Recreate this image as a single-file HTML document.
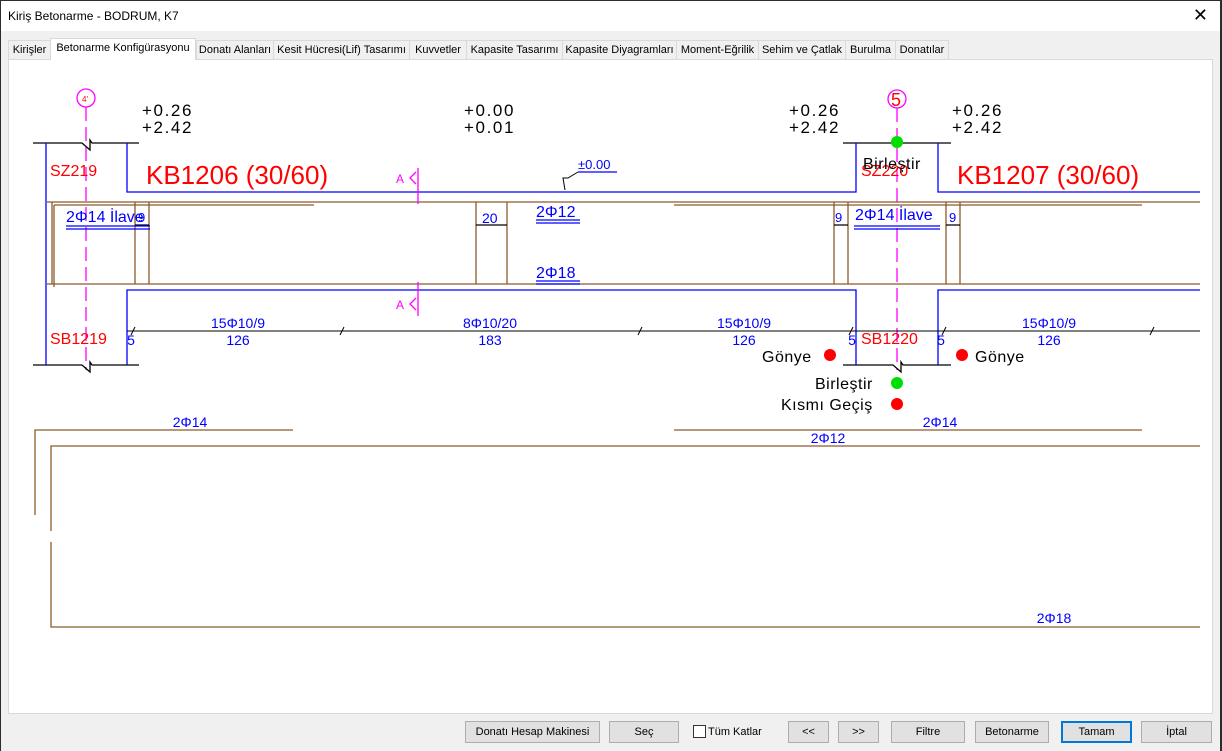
<!DOCTYPE html>
<html><head><meta charset="utf-8"><style>
*{margin:0;padding:0;box-sizing:border-box}
body{width:1222px;height:751px;overflow:hidden;background:#2b2b30;font-family:"Liberation Sans",sans-serif;position:relative}
#win{position:absolute;left:1px;top:1px;width:1219px;height:750px;background:#f0f0f0}
#title{position:absolute;left:0;top:0;width:1219px;height:30px;background:#fff;font-size:12px;color:#000;padding:8px 0 0 7px}
#close{position:absolute;right:12px;top:4px;font-size:18px}
.tab{position:absolute;top:39px;height:19px;border:1px solid #d9d9d9;border-bottom:none;background:#f0f0f0;font-size:11px;padding:3px 0 0 0;text-align:center;color:#000}
.tab.act{top:37px;height:22px;background:#fff;z-index:2}
#panel{position:absolute;left:7px;top:58px;width:1205px;height:655px;background:#fff;border:1px solid #d9d9d9}
.btn{position:absolute;top:720px;height:22px;background:#e1e1e1;border:1px solid #adadad;font-size:11px;text-align:center;padding-top:4px}
svg text{font-family:"Liberation Sans",sans-serif}
</style></head><body>
<div id="win">
<div id="title">Kiriş Betonarme - BODRUM, K7<span id="close">✕</span></div>
<div class="tab" style="left:7px;width:43px">Kirişler</div>
<div class="tab act" style="left:49px;width:146px;padding-top:3px">Betonarme Konfigürasyonu</div>
<div class="tab" style="left:195px;width:78px">Donatı Alanları</div>
<div class="tab" style="left:272px;width:137px">Kesit Hücresi(Lif) Tasarımı</div>
<div class="tab" style="left:408px;width:58px">Kuvvetler</div>
<div class="tab" style="left:465px;width:97px">Kapasite Tasarımı</div>
<div class="tab" style="left:561px;width:115px">Kapasite Diyagramları</div>
<div class="tab" style="left:675px;width:83px">Moment-Eğrilik</div>
<div class="tab" style="left:757px;width:88px">Sehim ve Çatlak</div>
<div class="tab" style="left:844px;width:51px">Burulma</div>
<div class="tab" style="left:894px;width:54px">Donatılar</div>
<div id="panel"></div>
<div class="btn" style="left:464px;width:135px">Donatı Hesap Makinesi</div>
<div class="btn" style="left:608px;width:70px">Seç</div>
<div style="position:absolute;left:692px;top:724px;width:13px;height:13px;border:1px solid #333;background:#fff"></div>
<div style="position:absolute;left:707px;top:725px;font-size:11px">Tüm Katlar</div>
<div class="btn" style="left:787px;width:41px">&lt;&lt;</div>
<div class="btn" style="left:837px;width:41px">&gt;&gt;</div>
<div class="btn" style="left:890px;width:74px">Filtre</div>
<div class="btn" style="left:974px;width:74px">Betonarme</div>
<div class="btn" style="left:1060px;width:71px;border:2px solid #0078d7;padding-top:3px">Tamam</div>
<div class="btn" style="left:1140px;width:71px">İptal</div>
</div>
<svg width="1222" height="751" style="position:absolute;left:0;top:0" xmlns="http://www.w3.org/2000/svg">
<g fill="none" stroke-width="1.3">
<circle cx="86" cy="98" r="9" stroke="#f0f"/>
<line x1="86" y1="107" x2="86" y2="370" stroke="#f0f" stroke-dasharray="14,6"/>
<circle cx="897" cy="99" r="9" stroke="#f0f"/>
<line x1="897" y1="108" x2="897" y2="370" stroke="#f0f" stroke-dasharray="14,6"/>
<path d="M33 143H82L90 150L90 140L92 143H139" stroke="#000"/>
<path d="M33 365H82L90 372L90 362L92 365H139" stroke="#000"/>
<path d="M843 143H951" stroke="#000"/>
<path d="M843 365H893L901 372L901 362L903 365H951" stroke="#000"/>
<path d="M46 143V365M127 143V192H856V143M938 143V192H1200" stroke="#00f"/>
<path d="M127 365V290H856V365M938 365V290H1200" stroke="#00f"/>
<g stroke="#8c5a2a">
<path d="M47 202H1200M54 205H314M674 205H1142M47 284H1200M52 202V284M54 205V287"/>
<path d="M135 202V284M149 202V284M476 202V284M507 202V284M834 202V284M848 202V284M946 202V284M960 202V284"/>
<path d="M35 515V430H293M674 430H1142M51 531V446H1200M51 542V627H1200"/>
</g>
<path d="M135 225H149M476 225H507M834 225H848M946 225H960" stroke="#000"/>
<path d="M418 168V204M418 282V316M416 172L410 178L416 184M416 298L410 304L416 310" stroke="#f0f"/>
<path d="M127 331H1200M131 335L135 327M340 335L344 327M638 335L642 327M849 335L853 327M942 335L946 327M1150 335L1154 327" stroke="#000" stroke-width="1"/>
<path d="M578 172H617M578 172L568 178H563L565 190" stroke="#000" stroke-width="1"/>
<g stroke="#00f">
<path d="M66 226H150M66 229H150M536 220H580M536 223H580M536 281H580M536 284H580M854 226H940M854 229H940M578 172H617"/>
</g>
</g>
<g fill="#f00"><text x="82" y="102" font-size="8">4'</text><text x="891" y="106" font-size="18">5</text></g>
<g font-family="DejaVu Sans" font-size="17" fill="#000" letter-spacing="1.6">
<text x="142" y="116">+0.26</text><text x="142" y="133">+2.42</text>
<text x="464" y="116">+0.00</text><text x="464" y="133">+0.01</text>
<text x="789" y="116">+0.26</text><text x="789" y="133">+2.42</text>
<text x="952" y="116">+0.26</text><text x="952" y="133">+2.42</text>
</g>
<g fill="#f00">
<text x="50" y="176" font-size="16">SZ219</text>
<text x="146" y="184" font-size="26">KB1206 (30/60)</text>
<text x="957" y="184" font-size="26">KB1207 (30/60)</text>
<text x="861" y="176" font-size="16">SZ220</text>
<text x="50" y="344" font-size="16">SB1219</text>
<text x="861" y="344" font-size="16">SB1220</text>
</g>
<g fill="#f0f" font-size="12"><text x="396" y="183">A</text><text x="396" y="309">A</text></g>
<g fill="#00f">
<text x="66" y="222" font-size="16">2Φ14 İlave</text>
<text x="138" y="222" font-size="13">9</text>
<text x="482" y="223" font-size="14">20</text>
<text x="536" y="217" font-size="16">2Φ12</text>
<text x="536" y="278" font-size="16">2Φ18</text>
<text x="855" y="220" font-size="16">2Φ14 İlave</text>
<text x="835" y="222" font-size="13">9</text>
<text x="949" y="222" font-size="13">9</text>
<text x="578" y="169" font-size="13">±0.00</text>
<g font-size="14" text-anchor="middle">
<text x="238" y="328">15Φ10/9</text><text x="238" y="345">126</text>
<text x="490" y="328">8Φ10/20</text><text x="490" y="345">183</text>
<text x="744" y="328">15Φ10/9</text><text x="744" y="345">126</text>
<text x="1049" y="328">15Φ10/9</text><text x="1049" y="345">126</text>
<text x="131" y="345">5</text><text x="852" y="345">5</text><text x="941" y="345">5</text>
<text x="190" y="427">2Φ14</text><text x="940" y="427">2Φ14</text>
<text x="828" y="443">2Φ12</text><text x="1054" y="623">2Φ18</text>
</g>
</g>
<g font-family="DejaVu Sans" font-size="16" fill="#000" letter-spacing="0.5">
<text x="863" y="169">Birleştir</text>
<text x="762" y="362">Gönye</text>
<text x="975" y="362">Gönye</text>
<text x="815" y="389">Birleştir</text>
<text x="781" y="410">Kısmı Geçiş</text>
</g>
<circle cx="897" cy="142" r="6" fill="#0d0"/>
<circle cx="830" cy="355" r="6" fill="#f00"/>
<circle cx="962" cy="355" r="6" fill="#f00"/>
<circle cx="897" cy="383" r="6" fill="#0d0"/>
<circle cx="897" cy="404" r="6" fill="#f00"/>
</svg>
</body></html>
